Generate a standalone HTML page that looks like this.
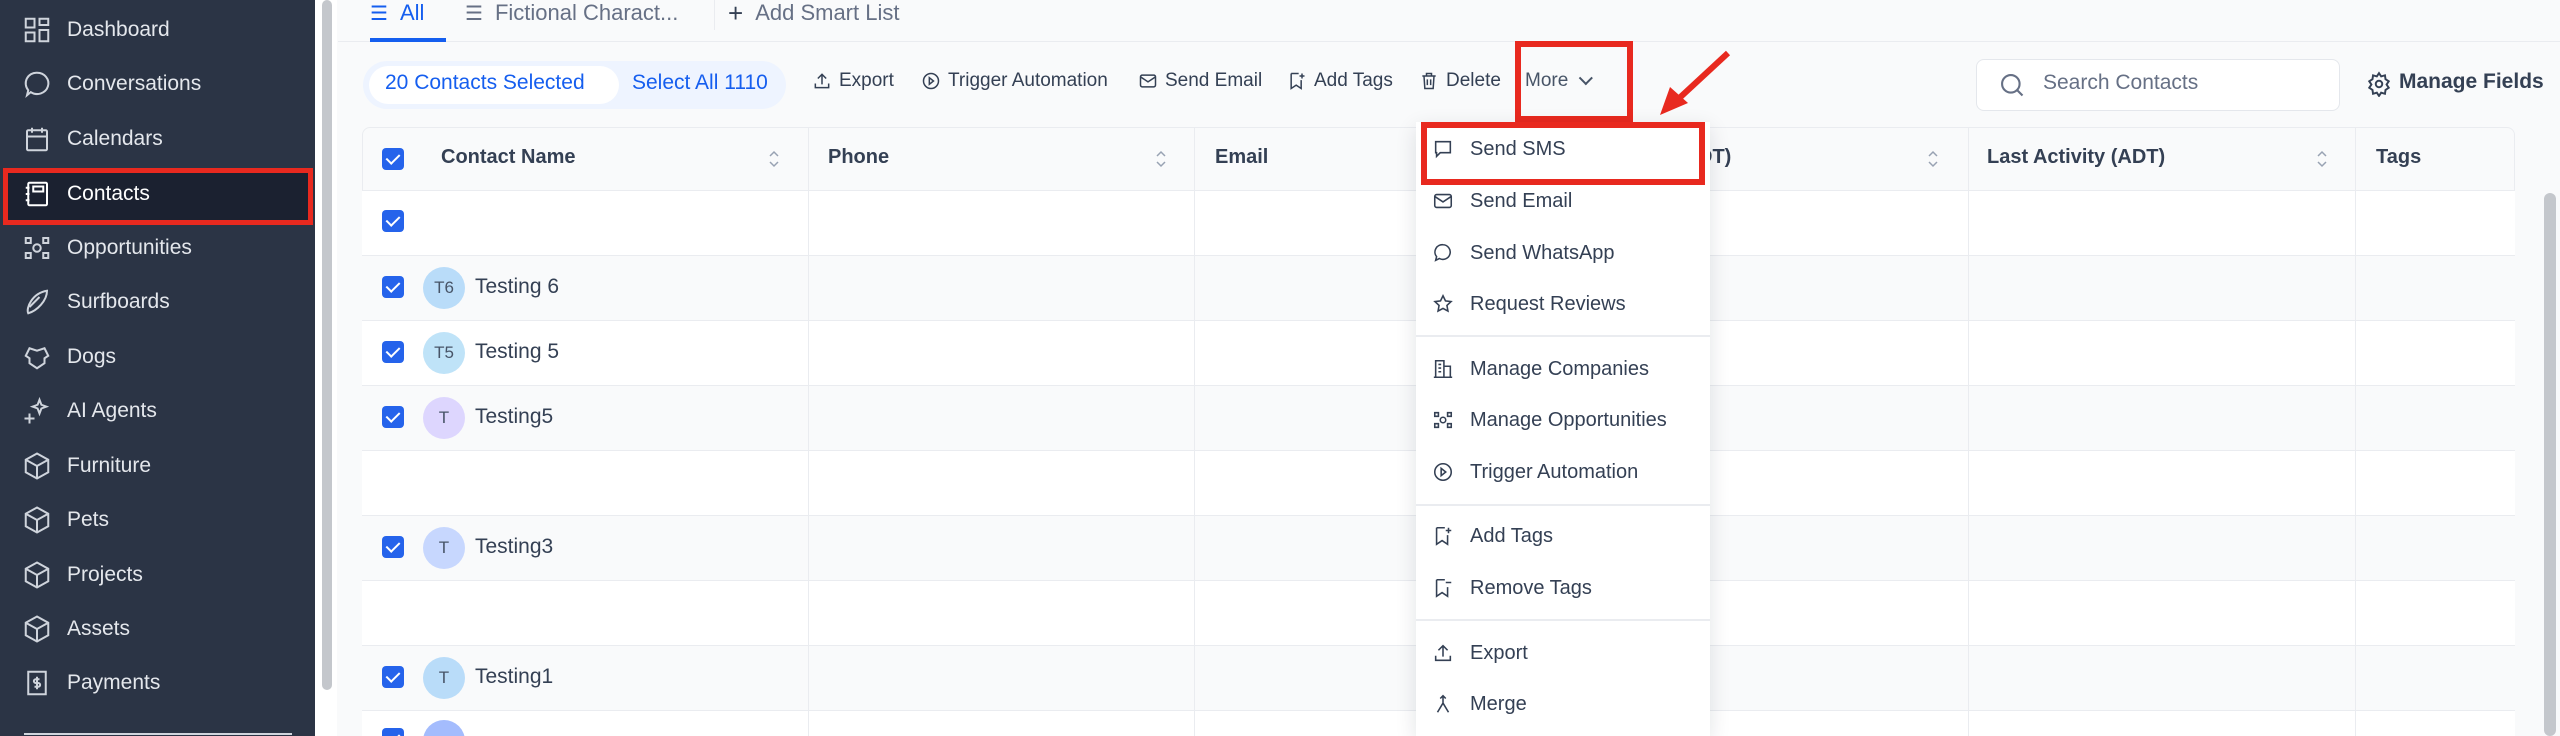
<!DOCTYPE html>
<html><head><meta charset="utf-8"><style>
*{box-sizing:border-box;margin:0;padding:0}
html,body{width:2560px;height:736px;overflow:hidden}
body{background:#f9fafb;font-family:"Liberation Sans",sans-serif;color:#344054}
#w{position:relative;width:2560px;height:736px;overflow:hidden}
.abs{position:absolute}
.sb{left:0;top:0;width:315px;height:736px;background:#2b3445}
.si{position:absolute;left:0;width:315px;height:54px;display:flex;align-items:center;color:#e4e7ec;font-size:21px}
.si svg{position:absolute;left:22px;width:30px;height:30px;fill:none;stroke:#cfd4dc;stroke-width:1.6}
.si span{position:absolute;left:67px}
.tb{font-size:19px;color:#344054;top:70px;display:flex;align-items:center}
.tb svg{width:20px;height:20px;fill:none;stroke:#344054;stroke-width:1.8;margin-right:7px}
.row{position:absolute;left:362px;width:2153px;height:65px;border-bottom:1px solid #eaecf0}
.vl{position:absolute;top:128px;width:1px;height:608px;background:#eaecf0}
.cb{position:absolute;left:382px;width:22px;height:22px;border-radius:4px;background:#2563eb}
.cb:after{content:"";position:absolute;left:7px;top:3px;width:6px;height:11px;border:solid #fff;border-width:0 2.6px 2.6px 0;transform:rotate(45deg)}
.av{position:absolute;left:423px;width:42px;height:42px;border-radius:50%;background:#b9dcf9;color:#475467;font-size:17px;display:flex;align-items:center;justify-content:center}
.nm{position:absolute;left:475px;font-size:21px;color:#344054}
.mi{position:absolute;left:1416px;width:294px;height:50px;display:flex;align-items:center;font-size:20px;color:#344054}
.mi svg{position:absolute;left:16px;width:22px;height:22px;fill:none;stroke:#344054;stroke-width:1.7}
.mi span{position:absolute;left:54px}
.dv{position:absolute;left:1416px;width:294px;height:2px;background:#eaecf0}
.hd{position:absolute;top:146px;font-size:20px;font-weight:bold;color:#344054}
.sort{position:absolute;top:148px;width:12px;height:22px}
</style></head><body><div id="w">
<div class="abs sb"></div>
<div class="si" style="top:3px"><svg viewBox="0 0 24 24"><rect x="3" y="3" width="7" height="7"/><rect x="14" y="3" width="7" height="5"/><rect x="3" y="14" width="7" height="7"/><rect x="14" y="12" width="7" height="9"/></svg><span>Dashboard</span></div>
<div class="si" style="top:57px"><svg viewBox="0 0 24 24"><path d="M12 3a9 8.5 0 1 1-5 15.5L4 21l1-4A8.5 8.5 0 0 1 12 3z"/></svg><span>Conversations</span></div>
<div class="si" style="top:112px"><svg viewBox="0 0 24 24"><rect x="4" y="5" width="16" height="16" rx="1"/><path d="M4 10h16M8 3v4M16 3v4"/></svg><span>Calendars</span></div>
<div class="abs" style="left:3px;top:168px;width:310px;height:57px;background:#1b2130;border:5px solid #e8291f"></div>
<div class="si" style="top:167px"><svg viewBox="0 0 24 24" style="stroke:#fff"><rect x="5" y="3" width="15" height="18" rx="1"/><rect x="9" y="6" width="8" height="4"/><path d="M3 7h3M3 12h3M3 17h3"/></svg><span style="color:#fff">Contacts</span></div>
<div class="si" style="top:221px"><svg viewBox="0 0 24 24"><circle cx="12" cy="12" r="3"/><path d="M3 4h4v4H3zM17 4h4v4h-4zM3 16h4v4H3zM17 16h4v4h-4z"/></svg><span>Opportunities</span></div>
<div class="si" style="top:275px"><svg viewBox="0 0 24 24"><path d="M5 21C3 17 8 5 20 3c0 8-8 16-15 18zM6 16l8-8"/></svg><span>Surfboards</span></div>
<div class="si" style="top:330px"><svg viewBox="0 0 24 24"><path d="M6 5l-3 6 3 2v4l6 4 6-4v-4l3-2-3-6-6 2z"/></svg><span>Dogs</span></div>
<div class="si" style="top:384px"><svg viewBox="0 0 24 24"><path d="M14 3l1.5 4 4 1.5-4 1.5L14 14l-1.5-4-4-1.5 4-1.5zM6 14v8M2 18h8"/></svg><span>AI Agents</span></div>
<div class="si" style="top:439px"><svg viewBox="0 0 24 24"><path d="M12 2l9 5v10l-9 5-9-5V7zM3 7l9 5 9-5M12 12v10"/></svg><span>Furniture</span></div>
<div class="si" style="top:493px"><svg viewBox="0 0 24 24"><path d="M12 2l9 5v10l-9 5-9-5V7zM3 7l9 5 9-5M12 12v10"/></svg><span>Pets</span></div>
<div class="si" style="top:548px"><svg viewBox="0 0 24 24"><path d="M12 2l9 5v10l-9 5-9-5V7zM3 7l9 5 9-5M12 12v10"/></svg><span>Projects</span></div>
<div class="si" style="top:602px"><svg viewBox="0 0 24 24"><path d="M12 2l9 5v10l-9 5-9-5V7zM3 7l9 5 9-5M12 12v10"/></svg><span>Assets</span></div>
<div class="si" style="top:656px"><svg viewBox="0 0 24 24"><rect x="5" y="3" width="14" height="18"/><path d="M14 9h-3a1.5 1.5 0 0 0 0 3h2a1.5 1.5 0 0 1 0 3h-3M12 7v10"/></svg><span>Payments</span></div>
<div class="abs" style="left:24px;top:733px;width:268px;height:2px;background:#d0d5dd"></div>
<div class="abs" style="left:315px;top:0;width:22px;height:736px;background:#fff"></div>
<div class="abs" style="left:322px;top:0;width:10px;height:690px;background:#c4c7cc;border-radius:5px"></div>

<div class="abs" style="left:338px;top:41px;width:2222px;height:1px;background:#eaecf0"></div>
<div class="abs" style="left:370px;top:0;font-size:22px;color:#155eef;display:flex;align-items:center;height:26px"><span style="font-size:20px;margin-right:12px">☰</span>All</div>
<div class="abs" style="left:370px;top:38px;width:76px;height:4px;background:#155eef"></div>
<div class="abs" style="left:465px;top:0;font-size:22px;color:#667085;display:flex;align-items:center;height:26px"><span style="font-size:20px;margin-right:12px">☰</span>Fictional Charact...</div>
<div class="abs" style="left:714px;top:0;width:1px;height:30px;background:#eaecf0"></div>
<div class="abs" style="left:728px;top:0;font-size:22px;color:#667085;height:26px;display:flex;align-items:center"><span style="font-size:26px;color:#344054;margin-right:12px">+</span>Add Smart List</div>

<div class="abs" style="left:363px;top:61px;width:423px;height:48px;border-radius:24px;background:#eef4ff"></div>
<div class="abs" style="left:369px;top:66px;width:250px;height:38px;border-radius:19px;background:#fff"></div>
<div class="abs" style="left:385px;top:71px;font-size:21px;color:#155eef">20 Contacts Selected</div>
<div class="abs" style="left:632px;top:71px;font-size:21px;color:#155eef">Select All 1110</div>
<div class="abs tb" style="left:812px"><svg viewBox="0 0 24 24"><path d="M12 16V4M7 9l5-5 5 5M4 15v5h16v-5"/></svg>Export</div>
<div class="abs tb" style="left:921px"><svg viewBox="0 0 24 24"><circle cx="12" cy="12" r="9"/><path d="M10 8l5 4-5 4z"/></svg>Trigger Automation</div>
<div class="abs tb" style="left:1138px"><svg viewBox="0 0 24 24"><rect x="3" y="5" width="18" height="14" rx="2"/><path d="M3 7l9 6 9-6"/></svg>Send Email</div>
<div class="abs tb" style="left:1287px"><svg viewBox="0 0 24 24"><path d="M5 3h9M5 3v18l6-4 6 4V11M18 3v6M15 6h6"/></svg>Add Tags</div>
<div class="abs tb" style="left:1419px"><svg viewBox="0 0 24 24"><path d="M4 6h16M9 6V3h6v3M6 6l1 15h10l1-15M10 10v7M14 10v7"/></svg>Delete</div>
<div class="abs tb" style="left:1525px;color:#475467">More <span style="margin-left:10px;display:inline-block;width:10px;height:10px;border:solid #475467;border-width:0 2px 2px 0;transform:rotate(45deg) translateY(-4px)"></span></div>
<div class="abs" style="left:1515px;top:41px;width:118px;height:81px;border:6px solid #e8291f"></div>
<svg class="abs" style="left:1650px;top:45px" width="90" height="75" viewBox="0 0 90 75"><path d="M78 8L24 58" stroke="#e8291f" stroke-width="6" fill="none"/><path d="M10 70L20 42L38 58z" fill="#e8291f"/></svg>
<div class="abs" style="left:1976px;top:59px;width:364px;height:52px;background:#fff;border:1px solid #e4e7ec;border-radius:8px"></div>
<svg class="abs" style="left:1998px;top:70px" width="28" height="30" viewBox="0 0 24 24" fill="none" stroke="#667085" stroke-width="1.8"><circle cx="11" cy="11" r="7.5"/><path d="M16.5 16.5L21 21"/></svg>
<div class="abs" style="left:2043px;top:71px;font-size:21px;color:#667085">Search Contacts</div>
<svg class="abs" style="left:2366px;top:71px" width="26" height="26" viewBox="0 0 24 24" fill="none" stroke="#344054" stroke-width="1.8"><circle cx="12" cy="12" r="3"/><path d="M12 2l2 3 3.5-1 .5 3.5 3 2-2 3 2 3-3 2-.5 3.5-3.5-1-2 3-2-3-3.5 1-.5-3.5-3-2 2-3-2-3 3-2 .5-3.5 3.5 1z"/></svg>
<div class="abs" style="left:2399px;top:70px;font-size:21px;font-weight:bold;color:#344054">Manage Fields</div>

<div class="abs" style="left:362px;top:127px;width:2153px;height:64px;background:#f9fafb;border:1px solid #eaecf0;border-radius:8px 8px 0 0"></div>
<div class="row" style="top:191px;background:#fff"></div>
<div class="row" style="top:256px;background:#f9fafb"></div>
<div class="row" style="top:321px;background:#fff"></div>
<div class="row" style="top:386px;background:#f9fafb"></div>
<div class="row" style="top:451px;background:#fff"></div>
<div class="row" style="top:516px;background:#f9fafb"></div>
<div class="row" style="top:581px;background:#fff"></div>
<div class="row" style="top:646px;background:#f9fafb"></div>
<div class="row" style="top:711px;background:#fff;height:25px;border:0"></div>
<div class="vl" style="left:808px"></div><div class="vl" style="left:1194px"></div><div class="vl" style="left:1968px"></div><div class="vl" style="left:2355px"></div>
<div class="cb" style="top:148px"></div>
<div class="hd" style="left:441px">Contact Name</div><svg class="sort" style="left:768px" viewBox="0 0 12 22" fill="none" stroke="#98a2b3" stroke-width="1.5"><path d="M2 8l4-4 4 4M2 14l4 4 4-4"/></svg>
<div class="hd" style="left:828px">Phone</div><svg class="sort" style="left:1155px" viewBox="0 0 12 22" fill="none" stroke="#98a2b3" stroke-width="1.5"><path d="M2 8l4-4 4 4M2 14l4 4 4-4"/></svg>
<div class="hd" style="left:1215px">Email</div>
<div class="hd" style="left:1698px">DT)</div><svg class="sort" style="left:1927px" viewBox="0 0 12 22" fill="none" stroke="#98a2b3" stroke-width="1.5"><path d="M2 8l4-4 4 4M2 14l4 4 4-4"/></svg>
<div class="hd" style="left:1987px">Last Activity (ADT)</div><svg class="sort" style="left:2316px" viewBox="0 0 12 22" fill="none" stroke="#98a2b3" stroke-width="1.5"><path d="M2 8l4-4 4 4M2 14l4 4 4-4"/></svg>
<div class="hd" style="left:2376px">Tags</div>
<div class="abs" style="left:2544px;top:193px;width:12px;height:543px;background:#c4c7cc;border-radius:6px"></div>

<div class="cb" style="top:210px"></div>
<div class="cb" style="top:276px"></div><div class="av" style="top:267px">T6</div><div class="nm" style="top:275px">Testing 6</div>
<div class="cb" style="top:341px"></div><div class="av" style="top:332px;background:#bfe3f8">T5</div><div class="nm" style="top:340px">Testing 5</div>
<div class="cb" style="top:406px"></div><div class="av" style="top:397px;background:#ddd6fe">T</div><div class="nm" style="top:405px">Testing5</div>
<div class="cb" style="top:536px"></div><div class="av" style="top:527px;background:#c7d7fe">T</div><div class="nm" style="top:535px">Testing3</div>
<div class="cb" style="top:666px"></div><div class="av" style="top:657px">T</div><div class="nm" style="top:665px">Testing1</div>
<div class="cb" style="top:728px"></div><div class="av" style="top:720px;background:#a4bcfd"></div>

<div class="abs" style="left:1416px;top:122px;width:294px;height:614px;background:#fff;box-shadow:0 6px 20px rgba(16,24,40,.12)"></div>
<div class="mi" style="top:124px"><svg viewBox="0 0 24 24"><path d="M4 4h16v12H9l-4 4v-4H4z"/></svg><span>Send SMS</span></div>
<div class="abs" style="left:1421px;top:122px;width:284px;height:63px;border:6px solid #e8291f"></div>
<div class="mi" style="top:176px"><svg viewBox="0 0 24 24"><rect x="3" y="5" width="18" height="14" rx="2"/><path d="M3 7l9 6 9-6"/></svg><span>Send Email</span></div>
<div class="mi" style="top:228px"><svg viewBox="0 0 24 24"><path d="M12 3a8 8 0 1 1-4 15l-4 2 1-4A8 8 0 0 1 12 3z"/></svg><span>Send WhatsApp</span></div>
<div class="mi" style="top:279px"><svg viewBox="0 0 24 24"><path d="M12 3l2.7 5.6 6.1.8-4.5 4.2 1.1 6.1L12 16.8l-5.4 2.9 1.1-6.1-4.5-4.2 6.1-.8z"/></svg><span>Request Reviews</span></div>
<div class="dv" style="top:335px"></div>
<div class="mi" style="top:344px"><svg viewBox="0 0 24 24"><path d="M4 21V3h9v18M13 9h7v12M2 21h20M7 7h3M7 11h3M7 15h3"/></svg><span>Manage Companies</span></div>
<div class="mi" style="top:395px"><svg viewBox="0 0 24 24"><circle cx="12" cy="12" r="3"/><path d="M3 4h4v4H3zM17 4h4v4h-4zM3 16h4v4H3zM17 16h4v4h-4z"/></svg><span>Manage Opportunities</span></div>
<div class="mi" style="top:447px"><svg viewBox="0 0 24 24"><circle cx="12" cy="12" r="9"/><path d="M10 8l5 4-5 4z"/></svg><span>Trigger Automation</span></div>
<div class="dv" style="top:504px"></div>
<div class="mi" style="top:511px"><svg viewBox="0 0 24 24"><path d="M5 3h9M5 3v18l6-4 6 4V11M18 3v6M15 6h6"/></svg><span>Add Tags</span></div>
<div class="mi" style="top:563px"><svg viewBox="0 0 24 24"><path d="M5 3h9M5 3v18l6-4 6 4V11M15 6h6"/></svg><span>Remove Tags</span></div>
<div class="dv" style="top:619px"></div>
<div class="mi" style="top:628px"><svg viewBox="0 0 24 24"><path d="M12 16V4M7 9l5-5 5 5M4 15v5h16v-5"/></svg><span>Export</span></div>
<div class="mi" style="top:679px"><svg viewBox="0 0 24 24"><path d="M12 3v8M9 6l3-3 3 3M12 11l-6 10M12 11l6 10"/></svg><span>Merge</span></div>
</div></body></html>
